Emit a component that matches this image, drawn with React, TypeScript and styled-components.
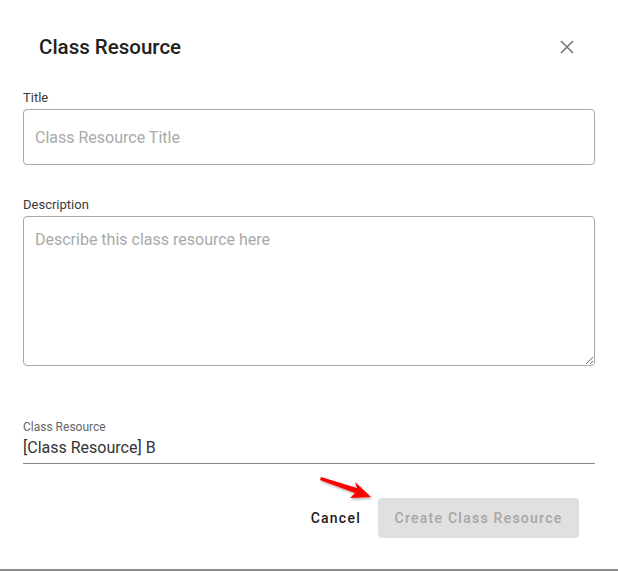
import React from 'react';
import styled, { createGlobalStyle } from 'styled-components';

const GlobalStyle = createGlobalStyle`
  html, body {
    margin: 0;
    padding: 0;
    background: #fff;
  }
  body {
    font-family: Roboto, "Liberation Sans", Arial, sans-serif;
  }
`;

const Dialog = styled.div`
  position: relative;
  box-sizing: border-box;
  width: 618px;
  height: 571px;
  padding: 0 23px;
  background: #fff;
  border-bottom: 2px solid #8c8c8c;
  display: flex;
  flex-direction: column;
`;

const Header = styled.div`
  display: flex;
  align-items: center;
  justify-content: space-between;
  padding: 31px 20px 0 16px;
  height: 32px;
`;

const Heading = styled.h2`
  margin: 0;
  font-size: 20.5px;
  font-weight: 500;
  line-height: 32px;
  color: #212121;
`;

const CloseButton = styled.button`
  border: 0;
  background: none;
  padding: 0;
  width: 16px;
  height: 16px;
  display: flex;
  align-items: center;
  justify-content: center;
  cursor: pointer;
`;

const Field = styled.div<{ $top: number }>`
  margin-top: ${(p) => p.$top}px;
  display: flex;
  flex-direction: column;
`;

const Label = styled.label`
  font-size: 13px;
  line-height: 16px;
  color: #3a3a3a;
  margin-bottom: 3px;
`;

const TextInput = styled.input`
  box-sizing: border-box;
  height: 56px;
  width: 100%;
  border: 1px solid #a8a8a8;
  border-radius: 4px;
  padding: 0 11px;
  font-family: inherit;
  font-size: 16px;
  color: #333;
  outline: none;
  &::placeholder {
    color: #a9a9a9;
  }
`;

const TextArea = styled.textarea`
  box-sizing: border-box;
  height: 150px;
  width: 100%;
  border: 1px solid #a8a8a8;
  border-radius: 4px;
  padding: 13px 11px;
  font-family: inherit;
  font-size: 16px;
  line-height: 19px;
  color: #333;
  outline: none;
  resize: vertical;
  &::placeholder {
    color: #a9a9a9;
  }
`;

const SmallLabel = styled.span`
  font-size: 12px;
  line-height: 14px;
  color: #666;
  margin-bottom: 4px;
`;

const Value = styled.div`
  font-size: 16px;
  line-height: 19px;
  color: #333;
  padding-bottom: 6px;
  border-bottom: 1px solid #8a8a8a;
`;

const Actions = styled.div`
  margin-top: 34px;
  display: flex;
  justify-content: flex-end;
  align-items: center;
  gap: 9px;
  padding-right: 16px;
`;

const TextButton = styled.button`
  border: 0;
  background: none;
  font-family: inherit;
  font-size: 14px;
  font-weight: 500;
  letter-spacing: 1.25px;
  color: #1a1a1a;
  padding: 8px 8px;
  cursor: pointer;
`;

const FilledButton = styled.button`
  border: 0;
  border-radius: 4px;
  height: 40px;
  width: 201px;
  background: #e0e0e0;
  font-family: inherit;
  font-size: 14px;
  font-weight: 500;
  letter-spacing: 1.25px;
  color: #a6a6a6;
  cursor: default;
`;

const Pointer = styled.svg`
  position: absolute;
  left: 319px;
  top: 475px;
  overflow: visible;
`;

export default function App() {
  return (
    <>
      <GlobalStyle />
      <Dialog>
        <Header>
          <Heading>Class Resource</Heading>
          <CloseButton aria-label="close">
            <svg width="14" height="14" viewBox="0 0 14 14">
              <path d="M1 1L13 13M13 1L1 13" stroke="#757575" strokeWidth="1.6" />
            </svg>
          </CloseButton>
        </Header>

        <Field $top={27}>
          <Label>Title</Label>
          <TextInput placeholder="Class Resource Title" />
        </Field>

        <Field $top={32}>
          <Label>Description</Label>
          <TextArea placeholder="Describe this class resource here" />
        </Field>

        <Field $top={54}>
          <SmallLabel>Class Resource</SmallLabel>
          <Value>[Class Resource] B</Value>
        </Field>

        <Actions>
          <TextButton>Cancel</TextButton>
          <FilledButton disabled>Create Class Resource</FilledButton>
        </Actions>

        <Pointer width="56" height="28" viewBox="0 0 56 28">
          <defs>
            <filter id="sh" x="-20%" y="-40%" width="140%" height="180%">
              <feDropShadow dx="1" dy="1.5" stdDeviation="1" floodColor="#000" floodOpacity="0.35" />
            </filter>
          </defs>
          <path
            d="M2 2 L38 13 L36 7 L52 22 L31 23 L36 18 L1 5 Z"
            fill="#f00"
            filter="url(#sh)"
          />
        </Pointer>
      </Dialog>
    </>
  );
}
